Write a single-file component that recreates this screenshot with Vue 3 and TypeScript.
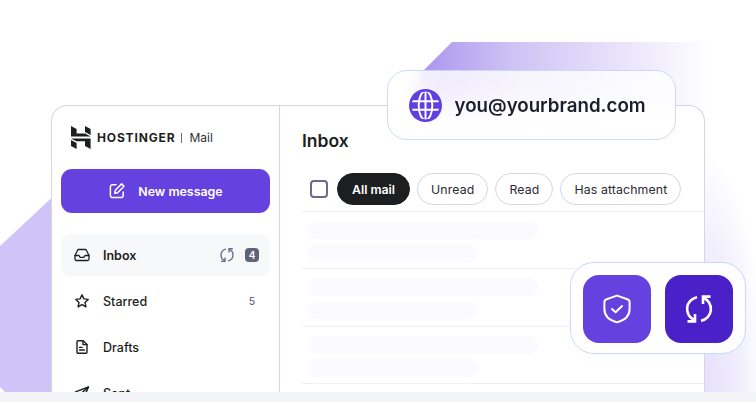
<script setup lang="ts">
const filters = ['Unread', 'Read', 'Has attachment']
const rows = [1, 2, 3]
</script>

<template>
  <div class="page">
    <div class="stage">
      <div class="shape-left"></div>
      <div class="shape-right"></div>

      <div class="card">
        <aside class="sidebar">
          <div class="brand">
            <svg class="logo" viewBox="0 0 20 23" width="20" height="23" fill="#1d1e20">
              <path d="M0 0L5.6 3V7.6H14.2L19.6 10.4H0Z" />
              <path d="M14 0L19.6 3V9L14 6Z" />
              <path d="M0 14L5.6 17V23L0 20Z" />
              <path d="M0 12.4H19.6V23L14 20V15.2H5.4Z" />
            </svg>
            <span class="brand-name">HOSTINGER</span>
            <span class="brand-sep"></span>
            <span class="brand-sub">Mail</span>
          </div>

          <button class="compose">
            <svg viewBox="0 0 18 18" width="18" height="18" fill="none" stroke="#fff" stroke-width="1.5" stroke-linecap="round" stroke-linejoin="round">
              <path d="M8 2.7H4.6A2.2 2.2 0 0 0 2.4 4.9V13.4A2.2 2.2 0 0 0 4.6 15.6H13A2.2 2.2 0 0 0 15.2 13.4V10" />
              <path d="M13.6 1.9L16 4.3L9.6 10.7L6.8 11.3L7.3 8.3Z" />
            </svg>
            <span>New message</span>
          </button>

          <nav class="nav">
            <div class="nav-item active">
              <svg viewBox="0 0 16 16" width="16" height="16" fill="none" stroke="#1d1e20" stroke-width="1.3" stroke-linejoin="round" stroke-linecap="round">
                <path d="M4 2.5H12L15 8.5V12A1.5 1.5 0 0 1 13.5 13.5H2.5A1.5 1.5 0 0 1 1 12V8.5Z" />
                <path d="M1 8.5H5L6 10.3H10L11 8.5H15" />
              </svg>
              <span class="nav-label strong">Inbox</span>
              <svg class="mini-sync" viewBox="0 0 28 28" width="14" height="14" fill="none" stroke="#6d6d85" stroke-width="2.8">
                <path d="M12 2.2A12 12 0 0 0 10 25.3" />
                <path d="M2.5 26.4H10V19" />
                <path d="M18 2.7A12 12 0 0 1 16 25.8" />
                <path d="M25.5 1.6H18V9" />
              </svg>
              <span class="badge">4</span>
            </div>
            <div class="nav-item">
              <svg viewBox="0 0 16 16" width="16" height="16" fill="none" stroke="#1d1e20" stroke-width="1.4" stroke-linejoin="round">
                <path d="M8 1.8L9.9 5.9L14.2 6.4L11 9.4L11.9 13.9L8 11.6L4.1 13.9L5 9.4L1.8 6.4L6.1 5.9Z" />
              </svg>
              <span class="nav-label">Starred</span>
              <span class="count">5</span>
            </div>
            <div class="nav-item">
              <svg viewBox="0 0 16 16" width="16" height="16" fill="none" stroke="#1d1e20" stroke-width="1.4" stroke-linejoin="round" stroke-linecap="round">
                <path d="M3 2.8A1 1 0 0 1 4 1.8H9.2L13 5.5V13.2A1 1 0 0 1 12 14.2H4A1 1 0 0 1 3 13.2Z" />
                <path d="M9 2V5.6H13" />
                <path d="M5.6 8.4H8M5.6 11H10.4" />
              </svg>
              <span class="nav-label">Drafts</span>
            </div>
            <div class="nav-item">
              <svg viewBox="0 0 16 16" width="16" height="16" fill="none" stroke="#1d1e20" stroke-width="1.4" stroke-linejoin="round">
                <path d="M14.5 2L1.5 6.8L6.6 8.9L9.2 14Z" />
                <path d="M6.6 8.9L14.5 2" />
              </svg>
              <span class="nav-label">Sent</span>
            </div>
          </nav>
        </aside>

        <main class="main">
          <h1 class="title">Inbox</h1>
          <div class="toolbar">
            <span class="checkbox"></span>
            <span class="pill pill-on">All mail</span>
            <span v-for="f in filters" :key="f" class="pill">{{ f }}</span>
          </div>
          <div class="list">
            <div v-for="r in rows" :key="r" class="row">
              <div class="bar bar-long"></div>
              <div class="bar bar-short"></div>
            </div>
          </div>
        </main>
      </div>

      <div class="email-chip">
        <svg viewBox="0 0 32 32" width="33" height="33" fill="none">
          <defs>
            <clipPath id="globe-clip"><circle cx="16" cy="16" r="13.4" /></clipPath>
          </defs>
          <circle cx="16" cy="16" r="16" fill="#5f3fe0" />
          <g stroke="#fff" stroke-width="1.9" clip-path="url(#globe-clip)">
            <ellipse cx="16" cy="16" rx="6.6" ry="14" />
            <path d="M16 1V31M2 11.8H30M2 20.2H30" />
          </g>
        </svg>
        <span class="email-text">you@yourbrand.com</span>
      </div>

      <div class="tiles">
        <div class="tile tile-light">
          <svg viewBox="0 0 28 30" width="28" height="30" fill="none" stroke="#fff" stroke-width="2" stroke-linecap="round" stroke-linejoin="round">
            <path d="M14 1.6L24.4 5.2Q26.6 6 26.6 8.2V15C26.6 21.6 21.4 26.4 14 28.4C6.6 26.4 1.4 21.6 1.4 15V8.2Q1.4 6 3.6 5.2Z" />
            <path d="M9 15L12.6 18.2L19 12" />
          </svg>
        </div>
        <div class="tile tile-dark">
          <svg viewBox="0 0 28 28" width="28" height="28" fill="none" stroke="#fff" stroke-width="2.6">
            <path d="M12 2.2A12 12 0 0 0 10 25.3" />
            <path d="M2.5 26.4H10V19" />
            <path d="M18 2.7A12 12 0 0 1 16 25.8" />
            <path d="M25.5 1.6H18V9" />
          </svg>
        </div>
      </div>
    </div>
    <div class="strip"></div>
  </div>
</template>

<style>
html, body {
  margin: 0;
  background: #fff;
}
</style>

<style scoped>
.page {
  width: 756px;
  height: 402px;
  overflow: hidden;
  font-family: Inter, "Liberation Sans", sans-serif;
  color: #1d1e20;
}
.stage {
  position: relative;
  height: 392px;
  padding: 105px 51px 0;
  box-sizing: border-box;
  overflow: hidden;
  background: #fff;
}
.strip {
  height: 10px;
  background: #f2f3f6;
}
.shape-left {
  position: absolute;
  left: 0;
  top: 190px;
  width: 60px;
  height: 202px;
  background: #cfc3f7;
  clip-path: polygon(0 56px, 60px 0, 60px 100%, 5px 100%, 0 197px);
}
.shape-right {
  position: absolute;
  left: 420px;
  top: 42px;
  width: 336px;
  height: 350px;
  background:
    radial-gradient(ellipse 60px 240px at 285px 100%, #e6e0fb 0%, rgba(230, 224, 251, 0.6) 55%, rgba(255, 255, 255, 0) 100%),
    linear-gradient(90deg, #ab95ee 0%, #cfc3f5 28%, #e9e3fb 60%, #fff 86%);
  background-size: 100% 100%, 100% 90px;
  background-repeat: no-repeat;
  clip-path: polygon(32px 0, 100% 0, 100% 100%, 0 100%, 0 32px);
}
.card {
  position: relative;
  display: flex;
  width: 654px;
  height: 287px;
  box-sizing: border-box;
  border: 1px solid #d6d6e3;
  border-bottom: 0;
  border-radius: 16px 16px 0 0;
  background: #fff;
  overflow: hidden;
}
.sidebar {
  width: 228px;
  flex: none;
  box-sizing: border-box;
  padding: 20px 9px 0;
  border-right: 1px solid #d6d6e3;
}
.brand {
  display: flex;
  align-items: center;
  height: 23px;
  padding-left: 10px;
}
.logo {
  flex: none;
  margin-right: 6px;
}
.brand-name {
  font-size: 12px;
  font-weight: 700;
  letter-spacing: 0.85px;
}
.brand-sep {
  width: 1px;
  height: 10px;
  background: #6d6d75;
  margin: 0 7px 0 6px;
}
.brand-sub {
  font-size: 12px;
  color: #2f2f36;
}
.compose {
  display: flex;
  align-items: center;
  justify-content: center;
  gap: 12px;
  width: 209px;
  height: 44px;
  margin-top: 20px;
  padding: 0;
  border: 0;
  border-radius: 11px;
  background: #6541e0;
  color: #fff;
  font: 600 12.4px Inter, sans-serif;
}
.nav {
  display: flex;
  flex-direction: column;
  gap: 4px;
  margin-top: 21px;
}
.nav-item {
  display: flex;
  align-items: center;
  height: 42px;
  flex: none;
  padding: 0 11px 0 13px;
  border-radius: 9px;
  font-size: 12.5px;
}
.nav-item.active {
  background: #f7f8fa;
}
.nav-label {
  flex: 1;
  margin-left: 13px;
  font-weight: 500;
}
.nav-label.strong {
  font-weight: 600;
}
.mini-sync {
  margin-right: 11px;
}
.badge {
  display: flex;
  align-items: center;
  justify-content: center;
  width: 14px;
  height: 14px;
  border-radius: 4px;
  background: #62627a;
  color: #fff;
  font-size: 10px;
  font-weight: 600;
}
.count {
  width: 14px;
  text-align: center;
  font-size: 10.5px;
  color: #4f4f72;
}
.main {
  flex: 1;
  min-width: 0;
  padding: 23px 0 0 22px;
}
.title {
  margin: 0;
  font-size: 17.5px;
  line-height: 24px;
  font-weight: 600;
}
.toolbar {
  display: flex;
  align-items: center;
  gap: 7px;
  height: 32px;
  margin-top: 20px;
  padding-left: 8px;
}
.checkbox {
  width: 18px;
  height: 18px;
  box-sizing: border-box;
  margin-right: 2px;
  border: 2px solid #6d6a8e;
  border-radius: 4px;
}
.pill {
  display: flex;
  align-items: center;
  height: 32px;
  box-sizing: border-box;
  padding: 0 13px;
  border: 1px solid #d6d6e3;
  border-radius: 16px;
  font-size: 12.3px;
  letter-spacing: 0.13px;
  color: #2b2b33;
  white-space: nowrap;
}
.pill-on {
  padding: 0 14px;
  border-color: #1d1e20;
  background: #1d1e20;
  color: #fff;
  font-weight: 600;
  letter-spacing: 0;
}
.list {
  margin-top: 6px;
  border-top: 1px solid #f0f0f4;
}
.row {
  box-sizing: border-box;
  height: 57.33px;
  padding: 9px 0 0 6px;
  border-bottom: 1px solid #f0f0f4;
}
.bar {
  height: 18px;
  border-radius: 9px;
  background: #fafaff;
}
.bar-long {
  width: 230px;
  margin-bottom: 5px;
}
.bar-short {
  width: 169px;
}
.email-chip {
  position: absolute;
  left: 387px;
  top: 70px;
  width: 289px;
  height: 70px;
  box-sizing: border-box;
  display: flex;
  align-items: center;
  gap: 13px;
  padding-left: 20.5px;
  border: 1.5px solid #c8d8ff;
  border-radius: 20px;
  background: rgba(255, 255, 255, 0.8);
  backdrop-filter: blur(12px);
}
.email-text {
  font-size: 18.7px;
  font-weight: 600;
  color: #1d1e2c;
}
.tiles {
  position: absolute;
  left: 570px;
  top: 262px;
  display: flex;
  gap: 14px;
  padding: 11.5px 12.5px 10.5px 11.5px;
  border: 1.5px solid #c8d8ff;
  border-radius: 24px;
  background: rgba(255, 255, 255, 0.88);
  backdrop-filter: blur(12px);
}
.tile {
  display: flex;
  align-items: center;
  justify-content: center;
  width: 68px;
  height: 68px;
  border-radius: 16px;
}
.tile-light {
  background: #6541e0;
}
.tile-dark {
  background: #4a20c8;
}
</style>
